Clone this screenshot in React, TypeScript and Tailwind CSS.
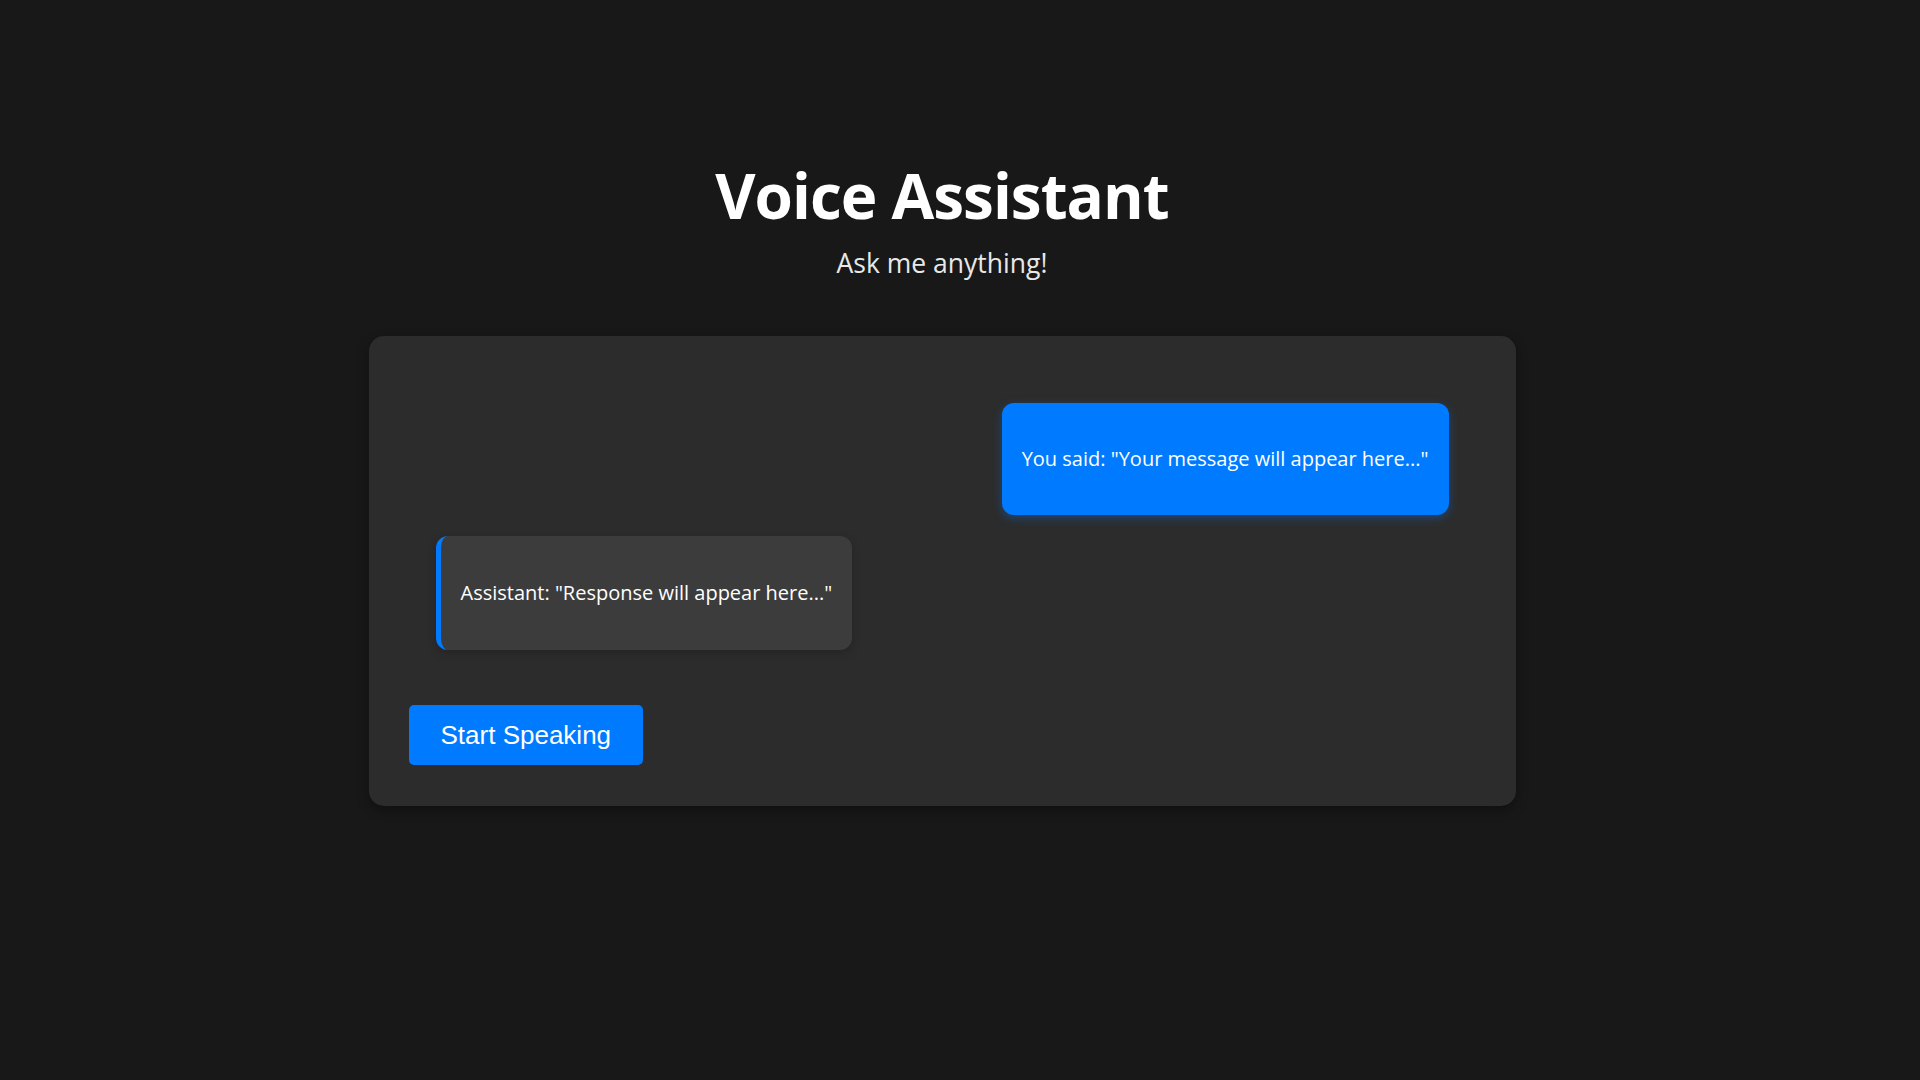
import { useState } from 'react';

// チャットメッセージの型
interface Message {
  id: string;
  role: 'user' | 'assistant';
  text: string;
}

const initialMessages: Message[] = [
  { id: '1', role: 'user', text: 'You said: "Your message will appear here..."' },
  { id: '2', role: 'assistant', text: 'Assistant: "Response will appear here..."' },
];

export default function App() {
  const [messages] = useState<Message[]>(initialMessages);
  const [isListening, setIsListening] = useState(false);

  return (
    <div
      className="min-h-screen w-full bg-[#181818] text-white pr-9"
      style={{ fontFamily: '"Open Sans", "Noto Sans", sans-serif' }}
    >
      <div className="flex flex-col items-center pt-[164px]">
        {/* ヘッダー */}
        <h1 className="text-[62px] leading-none font-bold tracking-[-1px]">Voice Assistant</h1>
        <p className="mt-[24px] text-[26.5px] leading-none text-[#e8e8e8]">Ask me anything!</p>

        {/* チャットカード */}
        <div className="mt-[59px] w-[1147px] rounded-[15px] bg-[#2c2c2c] px-10 pt-10 pb-[41px] shadow-[0_4px_12px_rgba(0,0,0,0.35)]">
          <div className="flex flex-col gap-[21px] px-[27px] pt-[27px] pb-[28px]">
            {messages.map((m) =>
              m.role === 'user' ? (
                <div
                  key={m.id}
                  className="self-end rounded-[12px] bg-[#007bff] px-5 py-10 text-[20px] leading-[32px] shadow-[0_3px_10px_rgba(0,123,255,0.35)]"
                >
                  {m.text}
                </div>
              ) : (
                <div
                  key={m.id}
                  className="self-start rounded-[12px] border-l-[5px] border-[#007bff] bg-[#3c3c3c] px-5 py-[41px] text-[20px] leading-[32px] shadow-[0_3px_10px_rgba(0,0,0,0.2)]"
                >
                  {m.text}
                </div>
              )
            )}
          </div>

          <button
            onClick={() => setIsListening(!isListening)}
            className="mt-[27px] rounded-[5px] bg-[#007bff] px-8 py-[15px] text-[26px] leading-[30px] text-white hover:bg-[#0069d9]"
            style={{ fontFamily: '"Liberation Sans", Arial, sans-serif' }}
          >
            {isListening ? 'Listening...' : 'Start Speaking'}
          </button>
        </div>
      </div>
    </div>
  );
}
